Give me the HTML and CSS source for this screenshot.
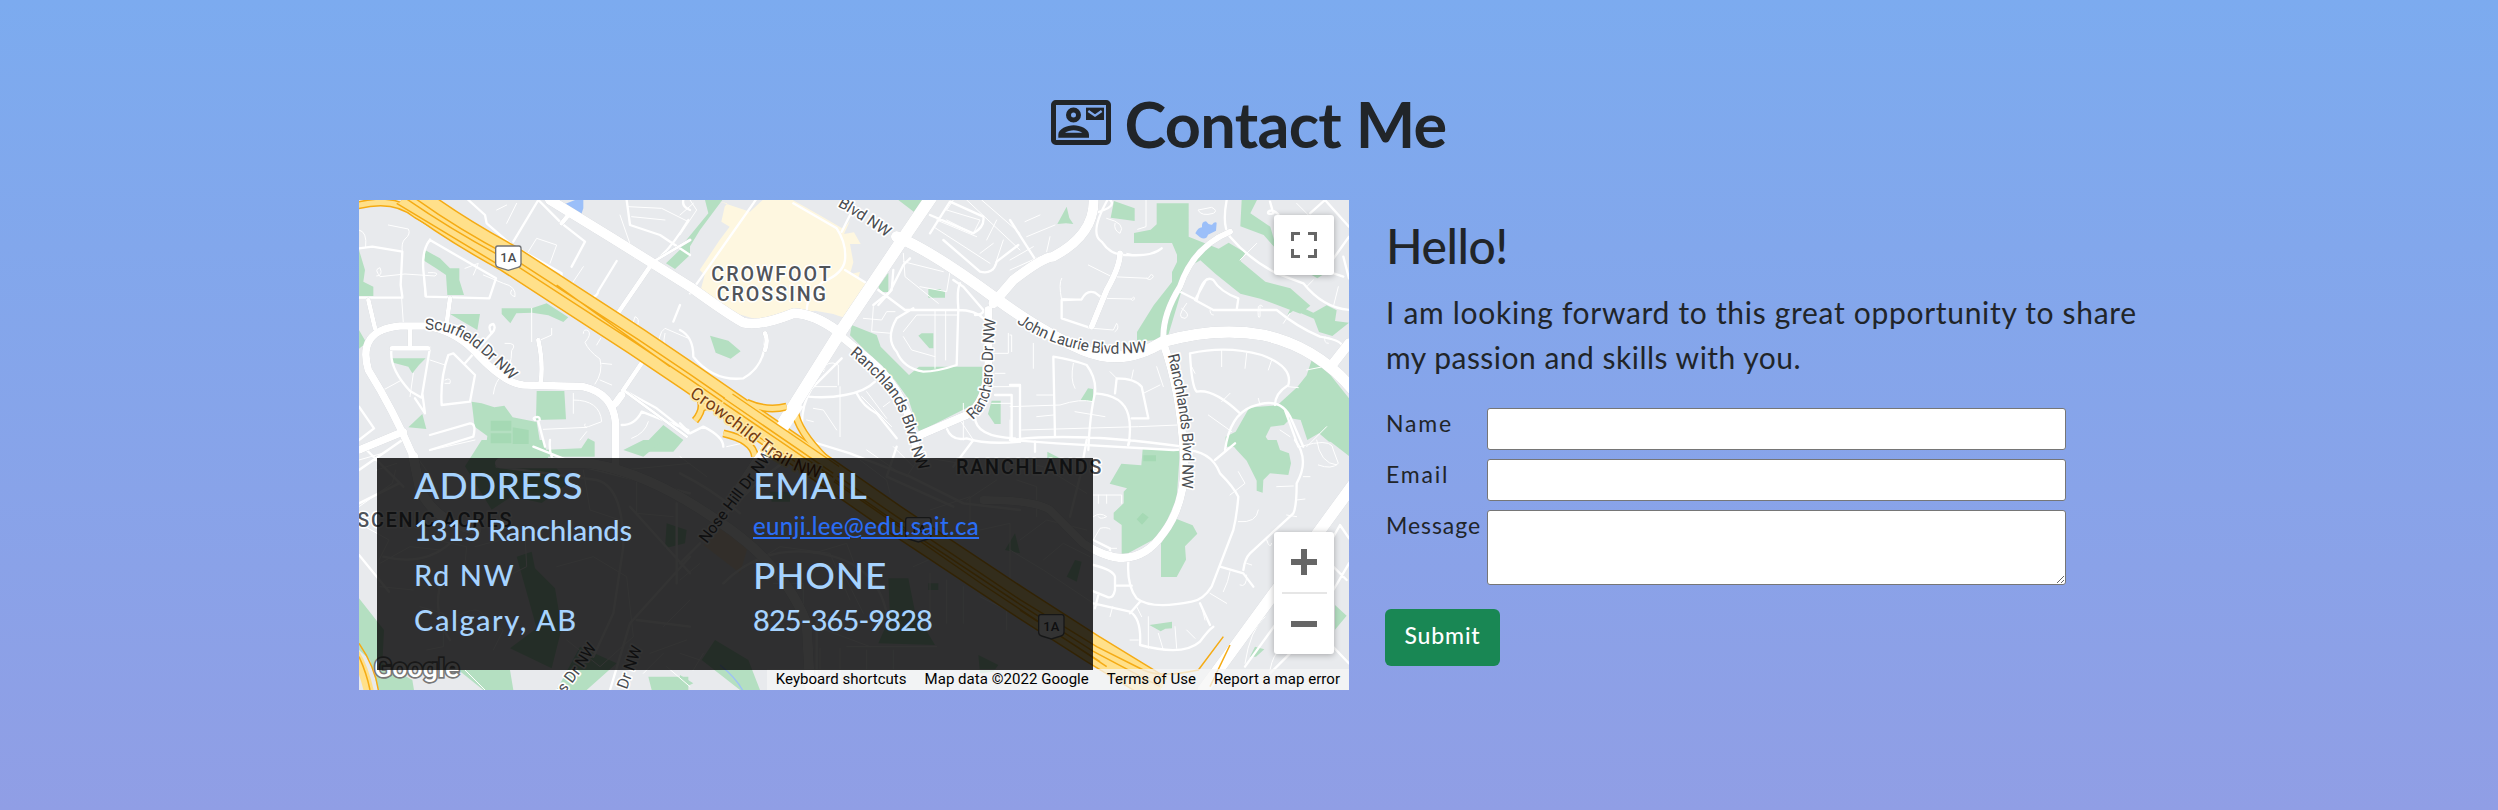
FILE: index.html
```html
<!DOCTYPE html>
<html lang="en">
<head>
<meta charset="utf-8">
<title>Contact Me</title>
<link rel="stylesheet" href="styles.css">
</head>
<body>
<section class="contact">
  <h1 class="title">
    <svg class="title-icon" viewBox="0 0 180 135" aria-hidden="true">
      <rect x="7.5" y="7.5" width="165" height="120" rx="7" fill="none" stroke="currentColor" stroke-width="15"/>
      <circle cx="67.500" cy="45" r="15" fill="none" stroke="currentColor" stroke-width="15"/>
      <path fill="currentColor" fill-rule="evenodd" d="M22 113v-9c0-17 26-28 46-28s46 11 46 28v9zM42 98h52c-6-4-17-7-26-7s-20 3-26 7z"/>
      <path fill="currentColor" d="M105 23h54v37h-54z"/>
      <path d="M112 33l20 14 20-14" fill="none" stroke="#80a9ec" stroke-width="7"/>
    </svg>
    <span class="title-text">Contact Me</span>
  </h1>
  <div class="columns">
    <div class="map">
      <svg class="map-canvas" viewBox="27 30 2970 1470">
        <defs>
          <g id="shield"><path d="M-32-35h64q6 0 6 7v46q0 9-9 11l-29 9-29-9q-9-2-9-11v-46q0-7 6-7z" fill="#fff" stroke="#707276" stroke-width="4"/><text class="shield-text" x="0" y="14">1A</text></g>
          <path id="p-scurfield" d="M225 420Q300 415 365 465T500 590"/>
          <path id="p-blvd" d="M1462 48Q1545 95 1640 165"/>
          <path id="p-crowchild" d="M1017 618Q1100 672 1215 765T1420 865"/>
          <path id="p-ranch1" d="M1498 492Q1580 560 1625 620Q1665 690 1685 780Q1700 830 1730 880"/>
          <path id="p-ranchero" d="M1868 690Q1930 640 1928 540Q1928 440 1942 360"/>
          <path id="p-john" d="M2000 398Q2100 470 2250 490Q2330 495 2420 482"/>
          <path id="p-ranch2" d="M2453 495Q2490 650 2498 760Q2498 830 2495 920"/>
          <path id="p-nose" d="M1070 1062L1275 790"/>
          <path id="p-acres" d="M590 1590Q650 1500 690 1450L765 1335"/>
          <path id="p-dr" d="M830 1500L880 1365"/>
        </defs>
        <rect width="3000" height="1510" fill="#e8eaed"/>

        <!-- parks -->
        <g class="park">
          <path d="M27 180l18 60-5 35 30 15v28H27zM27 420l22 38-22 18zM225 180l45 25 30 30h28v35l14 45h-50l-4-60-30-20-38-24zM300 372h90l-8 48q-35-20-82-48zM455 355h90l45-15 65 42-15 14-45-20-48-8-48 2-18 30-26-28zM122 505h105l-20 20-20 25-12-20-45-12zM948 220l72-70v45l-45 42zM560 603h83l5 85-90 2zM365 635l30 5 38 12 30-5 25 35 72 14 14 84 120-5 20-30 20 10v45H404l8-62-38-28zM940 705l60 45-30 35h-108zM175 712l42-40 12 45z"/>
          <path transform="translate(990)" d="M75 30h52L60 120 0 218v-45L85 70zM655 30h78l-28 38zM595 290l30-42v58h-22zM745 297h35l15 10v16h-50zM715 437l10-7h35v45h-12zM515 405l75 30 12 35 85 85 30-25h190v100l-190 96-32-100-40-55-75-75-60-60zM90 437l55 15 37 32-30 22-45-18zM935 632h27v70h-18l-20-30z"/>
          <path transform="translate(1980)" d="M312 33l62 22v38l-72-10zM142 102l28-52 8 34 12 18-22-2zM440 40h96v100l90 36 30-18 50 30-15 25 75 62 75 20 60 52-30 24-120-45-60-15-75-60-45-40-35 20-60 200-5 15-90 10v-30l50-80 55-70v-30l15-30v-22l-15-35H372v-30l50-10 18-16zM695 30h46l-20 40 60 40 20 70-40-45-70-26zM850 340l60 28 40-22 30 15-5 32 42 5-50 40-40-12-15-40-60-25-20 14zM905 510l40 25 72 90v130h-60l-30-25-35 20-20-60-30-5-20 20-40 5-15 30 20 30h-140v-30l30-15 40-70 20-4 65-5 60-55 28-35zM212 630l22-35 15 2v38zM905 255h32l-15 10z"/>
          <path transform="translate(0 750)" d="M395 0h185l15 54 60 75-80 60-90-20-60 40-80-130zM820 30l60-30h60l-60 50zM27 475l75 95-5 100 90 50 5 30H85L60 660l-33-30zM325 690h155l10 60h-90zM500 350l45-15 10 50 60 60 20 120-30 120-125-60 80-60zM950 250l60 20-5 40-60 15zM690 620l110 50-90 80h-90zM895 710h120v40h-110z"/>
          <path transform="translate(990 750)" d="M105 600l100 60 35 90h-60l-115-90zM0 705l40 25-40 20zM625 415h60l20 100 60 100-170-5 35-80zM895 645l60 30-15 20-40 5zM745 430h30v20h-30zM975 330l30-50 15 60zM270 155h60v30h-55z"/>
          <path transform="translate(1980 750)" d="M398 28h112l-10 150-50 110-115 62v-95l-24-17v-20l30-28v-35l10-10-52-14 35-60 60 5zM498 236l50 20 14 25-37 38 3 40-28 52h-47V310zM655 0h145l10 30 27 10 6 30-8 35-55-5-20 20-2 38-18-6v-30l-30-60-30-32zM955 0h62v48zM975 495l35 32-35 42zM720 650l15-30 28 8-25 22zM418 555l68-10v20l-20 1-14 8zM170 410l25-50 20 5-15 60zM112 35l35 18-35 4z"/>
        </g>
        <g fill="#a5d9b4"><path d="M422 692h62v30h-62zM422 730h62v30h-62zM488 712l48 8v42h-48z"/><path d="M2360 988l18-20 18 14-20 22zM2380 796h38v18h-38z"/></g>

        <!-- retail zone and ponds -->
        <path transform="translate(990)" fill="#fef7e0" d="M120 35l90 30 38-35h90l80 45 72 42 20-25-18 40 30-5 20 35h-32l10 55-10 35 30-6-5 18 45 28-40 80q-20 25-80 0l-55-10-50 10-80 30-100-30-52-28-20 6 55 35 12 17-78-52 10-5-40-45 12-45-15-15 60-90 30-40-25-15 10-45 8-10z"/>
        <path fill="#f7e6d3" d="M1060 1065l50-50 90 35-30 100z"/>
        <g fill="#9bbff9"><path d="M645 42l30-12h25v25l-10 30-20-10v-16z"/><path d="M2536 130q8-18 20-18-2-18 12-18 8 12 18 10 8-10 14-6l-2 24-24 12q-6 18-24 8z"/></g>
        <path d="M1110 1425q50 40 70 80" fill="none" stroke="#9bbff9" stroke-width="4"/>

        <!-- small streets -->
        <g class="minor">
          <path d="M27 120q25 5 20 50M115 105l60 12q8 15-10 30-12 10-8 40M90 260l75-8 90 6q18-12-20-10M90 258q-20-20 0-25 10 25-10 25M155 325l5 75M240 145q-20 20-20 100l5 75M430 612q5-40 30-60t25-70q20-25-20-22M545 355v100M560 455l45-20v-20M700 430q0-15 15-8 10 12-10 35 10 25 45 50 10 40-15 75M750 570l35 15M755 520l30 3M740 465l12-20M240 510l45 15M100 600l55-30M180 620l10-70M285 570q20-10 15 10h-15M345 235l40-15-15 35M400 255l60 25q40 10 35 40-20-5-10-20M470 100l30-60M440 60l30-15M535 185l25-40 60 20-20 55M660 290l40-60M810 75l45 130M835 50l100 5 80 40M845 80l100 10M670 610v60M670 630q80 0 85 65l-40 15q-15 5-10-8M580 718l130-6M690 750l20-25M845 745q40-15 50-50M865 430q-30 0-10-50 15 5 8 25M930 490q-10-60 15-75l70 30M945 430q-10 40 10 55l60 25"/>
          <path transform="translate(990)" d="M0 75l40-35M0 135l50-75L30 30M800 60l20-30M800 60l100 30-20 40-80-40M770 90l120 50M760 110l170 110M905 30l115 100M860 30l160 150M920 150l30-60M900 190l40-30M940 240l30-90M670 190l5 70 100 80M720 290l80 15 10-60M670 215l120 30M550 385l55 5 15-25h25M580 350l-5 75 60 5M670 425l40-50h120M765 360v175M797 360v150M670 440l25 40 70 20M430 545q10-40 45-20v60M390 590h80M480 590v150M400 655l30 5 40 60M545 620l90 90M560 605l60 80M610 650l20-15M945 550h30M985 430v60h-50M900 590h120M0 500q30 20 0 10M380 690l20 5M840 690l40 60M990 690v60M935 640h60M850 640v110"/>
          <path transform="translate(1980)" d="M290 85q60 15 40 45-20-10-15-30M350 190l30 6M408 30v80l-25 8M235 225l70 35 110 5q10-20 15-5-10 15-20 5M280 325l85 2q8-12 8 0-6 10-10 0M250 415l60 5 10-20q10 15-5 25M155 330q-10-50 0-65M155 325l60 5M45 95l45-20M50 140l85-35M110 185l10-45M0 210l70-40M0 240l90-40M690 210l50-50M565 60l40-8q20 10 5 18-35 10-45-8zM530 340q-35 45-5 45 20-10-10-30M600 360q0 15 10 15M750 350v30q-8 10-5-30 10-10 12 0M820 400l20-30M860 40l40 40M970 350l15-60M890 290l20-20M945 440q-5 20 10 20M0 435h5v50M70 460v75M190 520q-10 50 5 75M440 530l20 60M400 610l50-25M300 545l20 20M370 540l-5 25M80 615h50M195 665l90 15M80 680l50-5M35 720l350-10 120-5M0 650l150-5q60-20 100-10M635 480v50M710 490l-5 45M785 510l-10 30M555 550l-10-20M660 610l-25 25M595 675l70 50M750 645l-5-20M835 590l30 3M810 720l30 20M890 540l50-10M890 770l60-60"/>
          <path transform="translate(0 750)" d="M27 60l70-20M27 200l100-70 10-40M80 90l60-20M200 50l50 70M245 30l130-30M27 250l90 50-30 60M90 370l90-50 90 10M90 440l100 10M260 300l90 20-10 100M375 320l150-40 5 100-80 40M210 500l70 20v100l-50 10M300 540q100-60 100 0l60 30-30 60M620 380l110-30 100 60 20 180-100 90-100-80M700 90l20 120 90 30M820 90l200-20M860 100v120l110 10M940 560l80-80M900 640l110-40M880 700l60-60M950 680l70 60M345 690l60 60"/>
          <path transform="translate(990 750)" d="M140 20l90-20M0 50l80 60M220 370l80-50 150 20 60 140M280 430h90v90M400 340l100-30 30 80M490 400l60 120M540 60l80 60 10 40M560 30l100 70M640 20l60 60M680 110l40-60 120 20M750 210l120-40v80M860 180l90-60M900 270l90-20v170M700 380l90-40 60 60M750 400v150M800 420v130M850 440v110M900 470l80 40v60M500 620h270M420 625v125M480 625v125M560 630v120M640 630v120M410 560l160 60M0 420l60-50M0 640l60 20M40 690l30-50"/>
          <path transform="translate(1980 750)" d="M0 60l100 20 130 80M20 120l60 20v90M30 300l80-60 120 30M100 360l60-50 80 40M0 330l100 60 150 100M250 165h85v25M265 165v25M290 165v25M250 230q20-15 40 0-20 10-25 0M250 300l20-35q20-5 30 2M300 325h20M660 165l45-35-20-35M685 245q55 5 60-35M660 395q-5 30-20 60M710 370l15 5M600 460l50 30M380 500l15 30M415 530v95M445 580l15 50M495 560l5 65M530 570l25 25M575 500l10 40M360 600h25M300 530l8-30M690 435q20 10 20-30M770 300q10 30 15 10M800 140l50-2M830 225l30 5M860 180l25-3M870 20l40-10q60-10 60 20l15 40q-20 20-60 5M920 0q10 70 60 75M880 110h20M705 670q15-100 60-140M780 690q10-50 30-60"/>
        </g>
        <g class="street">
          <path d="M355 30l50 45 5 25 75 65 150 85q-5 25 15 35l75 38q18-5 20-20l55-90M490 155l75-125 70 70 70 55-40 75M27 175l40-5 90 15-5 100 5 35M27 323h130M240 150q-25 30-20 90l8 80 190 5 20-60L240 150M125 475q60 10 115-2l-25 150-35-20q-65-70-55-128zM310 490l65 65-15 80-85 10q-5-80 20-150zM345 520l80-90q-15-25 5-28 10 12-5 28M430 750M1000 30q-5 20 20 30M830 30l10 75 90 30 90 60M1015 90q-60 100-110 130M990 345l-20 50M820 600l100 55 95 75M815 705q40 0 60-40l140 55M555 690q-8-5 0-8 15-4 14 8M565 695l20 75M240 735l120-35q20 0 10 40l-130 40M27 650l45 65-45 35M195 625l30 45-8-60M790 380l-30-15-60-40"/>
          <path transform="translate(990)" d="M30 310L220 40l10-15M340 40l130 75q30 45 25 95-5 40-65 65-50 40-50 90M485 125l30-60M495 240l65 40M640 240l-5 60-40 45M595 300l80 60h160q50 0 75 25M580 345l50-40 40-80 20-20M750 130l60-95 100 45q5 30-30 50l-130-55M790 150l110 95q40 10 50-30l65-50M840 280q-10 20-5 75l-5 170q-60 20-100 20-60-10-80-60-35-40 0-100l50-30M820 270l30 20 60 70q0 15-25 15M385 620q60 5 110-5 60-10 90-40M370 750q-15-90 25-155l90-90M530 610q20 40 60 60l60 75M0 420q40 20 40 80 60 75 150 65 70-40 65-130M945 615h50v140M800 715q15 40 60 30 60 20 160 10M885 680q0 60 120 65M0 700l30 30 40-20q60 30 60 60"/>
          <path transform="translate(1980)" d="M0 90l80 125M250 70q80-20 45-45-60 105-20 130 30 45 80 40 70 5 100-20M160 330l55-2q15-30 40-20l20 15M155 330v55l90 30M500 300l60 30q20-80 50-60 20 35 75 55l-5 35h-70l-55-30 30-55M680 360h120q60 50 130 80 60 10 65 25M650 30q-15 80 10 110 60 70 140 110l80 30q60 75 140 80M780 35l10 35q-20 5-15-5 10-10 30 8M900 70l45-40 72 80M960 220l57-80M1000 200l17 65M940 240l60 20M540 490q110-25 215 5 95 35 80 90-40 25-40 60M540 490q5 100 20 115 50-10 130 65M0 585h30v170M130 500q60 10 100 25 30 40 25 85-15 60-20 170M130 500l5 240M255 610q85 5 100 65 10 40 0 90M315 610l5-45q55 0 75 25l20 95h-50M0 750q200-25 520 20M75 755v30M0 600M825 660l40 110M645 780q15-105 80-130 90-35 120 40l35 80"/>
          <path transform="translate(0 750)" d="M27 90l130-90M50 30l110 110M27 190l120-60M27 345l90 110M600 0q-5 50 20 70M100 350q120 30 200-40M300 600q-60-80-20-200M440 80l300 40q80 20 80 200l-30 200-60 130M550 20l150 60 320 80M840 200l180 200M1020 350l-180 200-60 200M860 540l160 20M980 190v240"/>
          <path transform="translate(990 750)" d="M140 220l100-100 80-60M380 0l130 40 180 70 160 80 170 20M650 20l-30 90 200 90M820 80l60-80M0 100q100 50 180 120M130 430q120-120 290-90t200 180M410 520v230M0 370l60-60"/>
          <path transform="translate(1980 750)" d="M0 0l140 10 350 20q110-10 140 70 40 40 55 70-5 60-15 100l-65 170q-25 40-60 45-120 25-165-10-30-40-25-110M360 0l-5 15M230 0l-20 110-30 120M250 300q30 15 50 25v20M250 375q60 15 65 35v40q-5 25-20 22l-50-20M320 437h45M250 490l110 25q35 20 30 100 130 35 180-10 25-35 40-45M360 520l30-35M265 465l-10 40M570 490l30 65M630 380l70 20 30 40M615 60l60-50M855 0q45 60 5 130 0 70-10 90l-130 120q-15 15-20 50M705 680l130-180M780 700l90-90M920 380l70-125 27 40M970 450l47-80M960 370l50 50M950 600l67 70"/>
        </g>

        <!-- arterial roads -->
        <g class="road">
          <path stroke-width="30" d="M600 30L780 140 1020 290Q1130 370 1180 398Q1230 410 1330 370Q1390 370 1465 425"/>
          <path stroke-width="37" d="M1745 20L1660 145 1465 435 1280 730 1170 900"/>
          <path stroke-width="34" d="M1640 140Q1740 180 1930 320Q2080 430 2200 480T2440 455Q2600 410 2740 435 2900 470 3010 600"/>
          <path stroke-width="30" d="M1930 340L1990 270Q2080 200 2110 200 2240 130 2230 20"/>
          <path stroke-width="23" d="M150 408H225Q310 420 370 480 460 580 520 585L700 590Q790 610 797 700V840M150 408Q20 420 55 540 130 660 190 800M797 640L815 615M27 780L160 725"/>
          <path stroke-width="14" d="M55 330L75 415"/>
          <path stroke-width="24" d="M1475 440L1560 510Q1680 610 1700 790M1710 735L1850 675Q1910 640 1915 520V360"/>
          <path stroke-width="24" d="M2440 460Q2490 600 2500 780 2515 930 2440 1030 2350 1160 2200 1060L2100 960Q2050 930 1900 930"/>
          <path stroke-width="18" d="M2440 440Q2440 370 2490 290 2530 170 2640 125M2310 190Q2310 230 2270 300L2225 410"/>
          <path stroke-width="36" d="M3020 870L2560 1500"/>
          <path stroke-width="30" d="M2950 520L2997 460"/>
          <path stroke-width="14" d="M180 420V465M125 475H235M290 400L300 325M565 450Q580 520 572 580M800 375L910 215M635 100L660 70M820 600L880 512M1245 430Q1255 450 1245 480"/>
          <path stroke-width="9" d="M910 215L1020 150M820 600L1010 740"/>
          <path stroke-width="30" d="M190 800L210 900Q260 1000 380 1020M450 820H720Q900 850 1100 990 1300 1120 1370 1300L1380 1490"/>
        </g>

        <!-- Crowchild Trail -->
        <g class="hwy">
          <path class="hwy-edge" stroke-width="88" d="M170 10Q300 110 475 205L860 455 1020 563 1320 770 1630 985 2010 1237 2230 1378 2430 1500"/>
          <path class="hwy-edge" stroke-width="24" d="M10 50Q130 15 200 75L440 215M1190 638Q1250 665 1310 650M1335 660Q1340 720 1430 810M1052 630Q1062 660 1035 692M1120 730Q1210 750 1215 800M1052 655L1090 640"/>
          <path class="hwy-fill" stroke-width="79" d="M170 10Q300 110 475 205L860 455 1020 563 1320 770 1630 985 2010 1237 2230 1378 2430 1500"/>
          <path class="hwy-fill" stroke-width="15" d="M10 50Q130 15 200 75L440 215M1190 638Q1250 665 1310 650M1335 660Q1340 720 1430 810M1052 630Q1062 660 1035 692M1120 730Q1210 750 1215 800M1052 655L1090 640"/>
          <path class="hwy-line" d="M160 20Q300 118 475 211L860 461 1020 568 1320 776 1630 991 2010 1243 2230 1384 2430 1490M175 10Q310 110 480 199L865 449 1020 553 1325 764 1640 980 2010 1229 2240 1370 2380 1440M140 40L460 233M620 285L960 530M1100 640L1460 880 1900 1185 2270 1430M2010 1260L2250 1415M2380 1440Q2430 1465 2545 1440L2620 1340M2580 1490L2640 1365"/>
          <path class="hwy-fill" stroke-width="30" d="M0 1370Q40 1420 60 1520"/>
          <path class="hwy-line" d="M27 1360Q75 1430 85 1500M27 1400Q50 1450 60 1500"/>
        </g>
        <path d="M1170 900L1345 640" stroke="#fff" stroke-width="38"/>
        <path class="hwy-edge" stroke-width="66" fill="none" d="M1130 638L1450 855"/>
        <path class="hwy-fill" stroke-width="58" fill="none" d="M1120 631L1460 862"/>
        <path class="hwy-line" fill="none" d="M1120 638L1450 862M1120 624L1450 850"/>

        <!-- labels -->
        <use href="#shield" x="475" y="203"/>
        <use href="#shield" x="2104" y="1309"/><use href="#shield" x="1705" y="1018"/>
        <g class="street-label">
          <text><textPath href="#p-scurfield" textLength="310">Scurfield Dr NW</textPath></text>
          <text><textPath href="#p-blvd" textLength="175">Blvd NW</textPath></text>
          <text><textPath href="#p-ranch1" textLength="420">Ranchlands Blvd NW</textPath></text>
          <text><textPath href="#p-ranchero" textLength="320">Ranchero Dr NW</textPath></text>
          <text><textPath href="#p-john" textLength="410">John Laurie Blvd NW</textPath></text>
          <text><textPath href="#p-ranch2" textLength="405">Ranchlands Blvd NW</textPath></text>
          <text><textPath href="#p-nose">Nose Hill Dr NW</textPath></text>
          <text><textPath href="#p-acres">Acres Dr NW</textPath></text>
          <text><textPath href="#p-dr">Dr NW</textPath></text>
          <text class="hwy-label"><textPath href="#p-crowchild" textLength="465">Crowchild Trail NW</textPath></text>
        </g>
        <g class="area-label">
          <text x="1084" y="274" textLength="358">CROWFOOT</text>
          <text x="1100" y="333" textLength="328">CROSSING</text>
          <text x="22" y="1011" textLength="462">SCENIC ACRES</text>
          <text x="1818" y="851" textLength="436">RANCHLANDS</text>
        </g>
        <text class="logo" x="72" y="1462" textLength="256">Google</text>
      </svg>
      <div class="attribution"><span>Keyboard shortcuts</span><span>Map data ©2022 Google</span><span>Terms of Use</span><span>Report a map error</span></div>
      <div class="card">
        <div class="card-col">
          <h3 class="address-head">ADDRESS</h3>
          <p>1315 Ranchlands</p>
          <p class="wide">Rd NW</p>
          <p class="wide">Calgary, AB</p>
        </div>
        <div class="card-col">
          <h3>EMAIL</h3>
          <a class="mail" href="mailto:eunji.lee@edu.sait.ca">eunji.lee@edu.sait.ca</a>
          <h3>PHONE</h3>
          <p class="phone">825-365-9828</p>
        </div>
      </div>
      <button class="map-btn full" aria-label="Fullscreen"><svg viewBox="0 0 26 26"><path d="M1.500 9V1.500h7.500M17 1.500h7.500v7.500M24.500 17v7.500h-7.500M9 24.500H1.500v-7.500" fill="none" stroke="#666" stroke-width="3"/></svg></button>
      <div class="map-btn zoom">
        <svg viewBox="0 0 26 26"><path d="M0 13h26M13 0v26" stroke="#666" stroke-width="6"/></svg>
        <i></i>
        <svg viewBox="0 0 26 26"><path d="M0 13h26" stroke="#666" stroke-width="6"/></svg>
      </div>
    </div>
    <div class="side">
      <h2>Hello!</h2>
      <p class="intro">I am looking forward to this great opportunity to share<br><span class="second">my passion and skills with you.</span></p>
      <form>
        <label for="name">Name</label><input id="name" type="text">
        <label for="email">Email</label><input id="email" type="text">
        <label class="tight" for="message">Message</label><textarea id="message"></textarea>
      </form>
      <button class="submit">Submit</button>
    </div>
  </div>
</section>
</body>
</html>
```
FILE: styles.css
```css
* { box-sizing: border-box; margin: 0; }
body { font-family: Lato, "Liberation Sans", sans-serif; color: #212529; }
h1, h2, h3 { font-weight: 500; }
.contact { height: 810px; padding-top: 79px; overflow: hidden; background: linear-gradient(#7cabef, #909ee5); }
.title { display: flex; justify-content: center; align-items: center; gap: 13px; height: 90px; margin-bottom: 31px; font-size: 63px; line-height: 90px; font-weight: 700; letter-spacing: -.7px; white-space: nowrap; }
.title-icon { width: 60px; height: 45px; margin-top: 2px; margin-bottom: 5px; }
.columns { display: flex; gap: 37px; padding-left: 359px; }
.map { position: relative; width: 990px; height: 490px; overflow: hidden; }
.map-canvas { display: block; width: 990px; height: 490px; font-family: Roboto, sans-serif; }
.park { fill: #b4dfc1; }
.minor, .street, .road { fill: none; stroke: #fff; stroke-linejoin: round; stroke-linecap: round; }
.minor { stroke-width: 3; }
.street { stroke-width: 7; }
.road { filter: drop-shadow(0 0 1.500px #b9bdc4); }
.hwy path { fill: none; }
.hwy-edge { stroke: #f5ab14; }
.hwy-fill { stroke: #ffe08a; }
.hwy-line { stroke: #f5ab14; stroke-width: 4.500; }
.shield-text { font-size: 39px; font-weight: 500; text-anchor: middle; fill: #4a4d51; }
.street-label { font-size: 47px; fill: #4a4d51; stroke: #fff; stroke-width: 10; stroke-linejoin: round; paint-order: stroke; }
.hwy-label { font-size: 52px; fill: #733b12; stroke: #ffe9a8; }
.area-label { font-size: 59px; font-weight: 500; fill: #50545a; stroke: #fff; stroke-width: 9; stroke-linejoin: round; paint-order: stroke; }
.logo { font-size: 80px; font-weight: 500; fill: #fff; stroke: #777; stroke-width: 10; paint-order: stroke; }
.attribution { position: absolute; right: 0; bottom: 0; display: flex; height: 21px; font: 15px/21px Roboto, sans-serif; letter-spacing: .04px; color: #000; background: rgba(245, 245, 245, .75); white-space: nowrap; }
.attribution span { padding: 0 9px; }
.card { position: absolute; left: 18px; top: 258px; display: flex; width: 716px; height: 212px; padding: 3px 0 0 37px; background: rgba(0, 0, 0, .8); color: #a6d3ff; white-space: nowrap; }
.card-col { width: 339px; font-size: 29px; line-height: 45px; }
.card-col p { height: 45px; font-weight: 500; letter-spacing: -.14px; }
.card-col .wide { letter-spacing: 1.55px; }
.card-col .phone { letter-spacing: -.9px; }
.card h3 { height: 46px; font-size: 37px; line-height: 47px; letter-spacing: .8px; }
.card .address-head { letter-spacing: .37px; }
.mail { display: block; width: max-content; height: 36px; margin-bottom: 8px; font-size: 24px; line-height: 37px; letter-spacing: .31px; color: #2a6df5; text-decoration: underline; font-weight: 500; }
.map-btn { position: absolute; right: 15px; display: flex; flex-direction: column; align-items: center; width: 60px; border: 0; padding: 0; border-radius: 3px; background: #fff; box-shadow: 0 1px 6px rgba(0, 0, 0, .3); }
.map-btn svg { width: 26px; height: 26px; }
.full { top: 15px; height: 60px; justify-content: center; }
.zoom { top: 332px; height: 122px; justify-content: space-between; padding: 17px 0; }
.zoom i { width: 45px; height: 2px; background: #e6e6e6; }
.side { padding-top: 16px; white-space: nowrap; }
.side h2 { font-size: 48px; line-height: 60px; letter-spacing: -.46px; }
.intro { margin: 14px 0 28px; font-size: 30px; line-height: 45px; letter-spacing: .69px; }
.second { letter-spacing: .49px; }
form { display: grid; grid-template-columns: 101px 579px; grid-template-rows: 42px 42px 75px; row-gap: 9px; }
label { font-size: 23px; line-height: 30px; letter-spacing: 1.8px; }
.tight { letter-spacing: .94px; }
input, textarea { width: 579px; height: 100%; border: 1px solid #767676; border-radius: 3px; background: #fff; display: block; }
.submit { width: 115px; height: 57px; margin: 24px 0 0 -1px; padding: 0 0 6px; border: 0; border-radius: 6px; background: #198754; color: #fff; font: 500 23px Lato, "Liberation Sans", sans-serif; letter-spacing: .83px; }
```
